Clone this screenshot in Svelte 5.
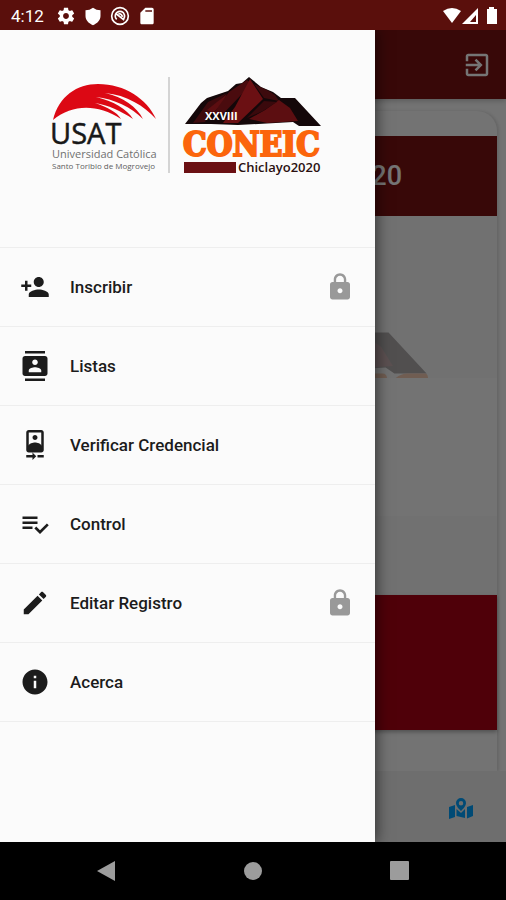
<script>
  const PERSON_ADD =
    "M15 12c2.21 0 4-1.79 4-4s-1.79-4-4-4-4 1.79-4 4 1.79 4 4 4zm-9-2V7H4v3H1v2h3v3h2v-3h3v-2H6zm9 4c-2.67 0-8 1.34-8 4v2h16v-2c0-2.66-5.33-4-8-4z";
  const CONTACTS =
    "M20 0H4v2h16V0zM4 24h16v-2H4v2zM20 4H4c-1.1 0-2 .9-2 2v12c0 1.1.9 2 2 2h16c1.1 0 2-.9 2-2V6c0-1.1-.9-2-2-2zm-8 2.75c1.24 0 2.25 1.01 2.25 2.25s-1.01 2.25-2.25 2.25S9.75 10.24 9.75 9 10.76 6.75 12 6.75zM17 17H7v-1.5c0-1.67 3.33-2.5 5-2.5s5 .83 5 2.5V17z";
  const CAMERA_FRONT =
    "M10 20H5v2h5v2l3-3-3-3v2zm4 0v2h5v-2h-5zM12 8c1.1 0 2-.9 2-2s-.9-2-2-2-1.99.9-1.99 2S10.9 8 12 8zm5-8H7C5.9 0 5 .9 5 2v14c0 1.1.9 2 2 2h10c1.1 0 2-.9 2-2V2c0-1.1-.9-2-2-2zM7 2h10v10.5c0-1.67-3.33-2.5-5-2.5s-5 .83-5 2.5V2z";
  const PLAYLIST_CHECK =
    "M14 10H2v2h12v-2zm0-4H2v2h12V6zM2 16h8v-2H2v2zm19.5-4.5L23 13l-6.99 7-4.51-4.5L13 14l3.01 3 5.49-5.5z";
  const EDIT =
    "M3 17.25V21h3.75L17.81 9.94l-3.75-3.75L3 17.25zM20.71 7.04c.39-.39.39-1.02 0-1.41l-2.34-2.34c-.39-.39-1.02-.39-1.41 0l-1.83 1.83 3.75 3.75 1.83-1.83z";
  const INFO =
    "M12 2C6.48 2 2 6.48 2 12s4.48 10 10 10 10-4.48 10-10S17.52 2 12 2zm1 15h-2v-6h2v6zm0-8h-2V7h2v2z";
  const LOCK =
    "M18 8h-1V6c0-2.76-2.24-5-5-5S7 3.24 7 6v2H6c-1.1 0-2 .9-2 2v10c0 1.1.9 2 2 2h12c1.1 0 2-.9 2-2V10c0-1.1-.9-2-2-2zm-6 9c-1.1 0-2-.9-2-2s.9-2 2-2 2 .9 2 2-.9 2-2 2zm3.1-9H8.9V6c0-1.71 1.39-3.1 3.1-3.1 1.71 0 3.1 1.39 3.1 3.1v2z";
  const EXIT =
    "M10.09 15.59L11.5 17l5-5-5-5-1.41 1.41L12.67 11H3v2h9.67l-2.58 2.59zM19 3H5c-1.11 0-2 .9-2 2v4h2V5h14v14H5v-4H3v4c0 1.1.89 2 2 2h14c1.1 0 2-.9 2-2V5c0-1.1-.9-2-2-2z";
  const SETTINGS =
    "M19.43 12.98c.04-.32.07-.64.07-.98s-.03-.66-.07-.98l2.11-1.65c.19-.15.24-.42.12-.64l-2-3.46c-.12-.22-.39-.3-.61-.22l-2.49 1c-.52-.4-1.08-.73-1.69-.98l-.38-2.65C14.46 2.18 14.25 2 14 2h-4c-.25 0-.46.18-.49.42l-.38 2.65c-.61.25-1.17.59-1.69.98l-2.49-1c-.23-.09-.49 0-.61.22l-2 3.46c-.13.22-.07.49.12.64l2.11 1.65c-.04.32-.07.65-.07.98s.03.66.07.98l-2.11 1.65c-.19.15-.24.42-.12.64l2 3.46c.12.22.39.3.61.22l2.49-1c.52.4 1.08.73 1.69.98l.38 2.65c.03.24.24.42.49.42h4c.25 0 .46-.18.49-.42l.38-2.65c.61-.25 1.17-.59 1.69-.98l2.49 1c.23.09.49 0 .61-.22l2-3.46c.12-.22.07-.49-.12-.64l-2.11-1.65zM12 15.5c-1.93 0-3.5-1.57-3.5-3.5s1.57-3.5 3.5-3.5 3.5 1.57 3.5 3.5-1.57 3.5-3.5 3.5z";
  const SHIELD = "M12 2Q8 5 3 5v7c0 5 4 9 9 11 5-2 9-6 9-11V5q-5 0-9-3z";
  const SD_CARD = "M18 2h-8L4 8v12c0 1.1.9 2 2 2h12c1.1 0 2-.9 2-2V4c0-1.1-.9-2-2-2zM10 5h8v2h-8z";

  const items = [
    { label: "Inscribir", icon: PERSON_ADD, locked: true },
    { label: "Listas", icon: CONTACTS, locked: false },
    { label: "Verificar Credencial", icon: CAMERA_FRONT, locked: false },
    { label: "Control", icon: PLAYLIST_CHECK, locked: false },
    { label: "Editar Registro", icon: EDIT, locked: true },
    { label: "Acerca", icon: INFO, locked: false },
  ];
</script>

{#snippet icon(path)}
  <svg class="icon" viewBox="0 0 24 24" aria-hidden="true">
    <path fill-rule="evenodd" d={path} />
  </svg>
{/snippet}

{#snippet mountain()}
  <path fill="#140709" d="M184 124L200 103L206 98L227 91L235 84L241 83L248 77L260 87L272 92L280 98L294 98L320 126H298L292 122L237 125L210 124Z" />
  <path fill="#3d0a0d" d="M192 123L207 102L226 93L212 107L204 122Z" />
  <path fill="#5c0e11" d="M206 110L226 94L221 104L212 113Z" />
  <path fill="#4a0b0e" d="M228 92L246 80L252 85L240 95L222 114L212 114Z" />
  <path fill="#6b1013" d="M249 79L262 99L237 123H222L234 107Z" />
  <path fill="#3d0a0d" d="M253 84L266 90L274 95L278 101L263 98Z" />
  <path fill="#5c0e11" d="M278 100L289 108L297 121L266 123L248 119L264 110Z" />
  <path fill="#3a090c" d="M263 101L276 102L262 111L246 118Z" />
{/snippet}

<div class="device">
  <header class="status-bar">
    <span class="clock">4:12</span>
    <div class="notices">
      {@render icon(SETTINGS)}
      {@render icon(SHIELD)}
      <svg class="icon" viewBox="0 0 24 24" aria-hidden="true">
        <g fill="none" stroke="#fff" stroke-width="2">
          <circle cx="12" cy="12" r="10" />
          <path d="M8 16A5.500 5.500 0 0 1 8 8q4-3 8 0q3 4 0 8M7 9l10 8M10 9q4 0 5 4" />
        </g>
      </svg>
      {@render icon(SD_CARD)}
    </div>
    <svg class="signals" viewBox="0 0 56 20" aria-hidden="true">
      <path fill="#fff" d="M1 5Q10-1 19 5L10 17Z" />
      <path fill="#fff" fill-rule="evenodd" d="M20 18L36 2V18ZM28 16h6V9z" />
      <path fill="#fff" d="M47 1h5v2h3v15H45V3h2z" />
    </svg>
  </header>

  <div class="screen">
    <main class="page">
      <div class="app-bar">
        <button class="exit" type="button" aria-label="Salir">{@render icon(EXIT)}</button>
      </div>
      <div class="content">
        <section class="card">
          <h1>Chiclayo 2020</h1>
          <div class="banner">
            <svg viewBox="183 76 140 53" aria-hidden="true">
              {@render mountain()}
              <path fill="#f26a1b" d="M272 130q0-4 4-4h14q3 0 3 4zM298 130q4-4 9-4h12q2 0 2 4z" />
            </svg>
          </div>
          <div class="blank"></div>
          <div class="detail"></div>
          <div class="block"></div>
        </section>
      </div>
      <div class="tabs">
        <button class="map" type="button" aria-label="Mapa">
          <svg viewBox="0 0 24 21" aria-hidden="true">
            <path fill-rule="evenodd" d="M12 0a5 5 0 0 1 5 5c0 3-3 6-5 8c-2-2-5-5-5-8a5 5 0 0 1 5-5zM12 3a2 2 0 0 0 0 4.500a2 2 0 0 0 0-4.500z" />
            <path d="M0 9L6 7V19L0 21ZM7.500 11L12 15L16 11V20L7.500 18ZM18 9L24 7V18L18 20.500Z" />
          </svg>
        </button>
      </div>
    </main>

    <div class="scrim"></div>

    <aside class="drawer">
      <div class="brand">
        <svg class="logo" viewBox="50 76 274 102" role="img" aria-label="USAT, XXVIII CONEIC Chiclayo 2020">
          <path fill="#dc0814" d="M52 120C58 96 76 84 97 84C124 84 146 99 155 119C143 106 126 95 104 93C122 97 136 107 142 119C130 107 113 99 95 97C112 101 126 109 132 119C120 111 107 105 94 103C106 107 116 112 120 119C96 104 72 104 52 120Z" />
          <text class="usat" x="49" y="144">USAT</text>
          <text class="uni" x="51" y="158">Universidad Católica</text>
          <text class="saint" x="51" y="169">Santo Toribio de Mogrovejo</text>
          <path fill="#d4d4d4" d="M167 77h2v96h-2z" />
          {@render mountain()}
          <text class="edition" x="204" y="120">XXVIII</text>
          <text class="coneic" x="182" y="156">CONEIC</text>
          <path fill="#6b1013" d="M183 162h52v11h-52z" />
          <text class="city" x="237" y="172">Chiclayo2020</text>
        </svg>
      </div>
      <nav>
        {#each items as item (item.label)}
          <button class="item" type="button">
            {@render icon(item.icon)}
            <span>{item.label}</span>
            {#if item.locked}
              <i class="lock">{@render icon(LOCK)}</i>
            {/if}
          </button>
        {/each}
      </nav>
    </aside>
  </div>

  <footer class="system-nav">
    <button type="button" aria-label="Atrás">
      <svg viewBox="0 0 22 22"><path d="M2 11L20 1V21Z" /></svg>
    </button>
    <button type="button" aria-label="Inicio">
      <svg viewBox="0 0 22 22"><circle cx="11" cy="11" r="9" /></svg>
    </button>
    <button type="button" aria-label="Recientes">
      <svg viewBox="0 0 22 22"><rect x="1" y="1" width="19" height="19" rx="1" /></svg>
    </button>
  </footer>
</div>

<style>
  :global(body) {
    margin: 0;
    background: #000;
  }

  .device {
    display: flex;
    flex-direction: column;
    min-height: 100vh;
    font-family: Roboto, "Liberation Sans", sans-serif;
  }

  button {
    appearance: none;
    border: none;
    background: none;
    padding: 0;
    font: inherit;
    color: inherit;
    cursor: pointer;
  }

  svg {
    display: block;
  }

  .icon {
    width: 30px;
    height: 30px;
    flex: none;
    fill: currentColor;
  }

  .status-bar {
    display: flex;
    align-items: center;
    height: 30px;
    box-sizing: border-box;
    padding: 1px 8px 0 11px;
    background: #5a0f0c;
    color: #fff;
  }

  .clock {
    font-size: 17px;
    line-height: 20px;
  }

  .notices {
    display: flex;
    gap: 7px;
    margin-left: 12px;
  }

  .notices .icon {
    width: 20px;
    height: 20px;
  }

  .signals {
    width: 56px;
    height: 20px;
    margin-left: auto;
  }

  /* page, scrim and drawer share one cell */
  .screen {
    display: grid;
    grid-template-columns: minmax(0, 1fr);
    flex: 1;
    overflow: hidden;
  }

  .page,
  .scrim,
  .drawer {
    grid-area: 1 / 1;
    isolation: isolate;
  }

  .page {
    display: flex;
    flex-direction: column;
    background: #fafafa;
  }

  .app-bar {
    display: flex;
    align-items: center;
    justify-content: flex-end;
    height: 69px;
    padding-right: 14px;
    background: #7b1313;
    color: #fff;
    box-shadow: 0 2px 5px rgba(0, 0, 0, 0.2);
  }

  .content {
    flex: 1;
    display: flex;
    flex-direction: column;
    padding: 12px 9px 0;
  }

  .card {
    flex: 1;
    padding-top: 25px;
    border-radius: 0 20px 0 0;
    box-shadow: 2px 0 3px rgba(0, 0, 0, 0.12);
  }

  h1 {
    margin: 0;
    padding-right: 95px;
    background: #7b1313;
    color: #fff;
    font-size: 27px;
    font-weight: 500;
    line-height: 80px;
    text-align: right;
  }

  .banner {
    display: flex;
    align-items: flex-end;
    justify-content: flex-end;
    height: 162px;
    padding-right: 66px;
    background: #f6f6f6;
  }

  .banner svg {
    width: 205px;
    height: 78px;
    opacity: 0.3;
  }

  .blank {
    height: 138px;
  }

  .detail {
    height: 79px;
    background: #f6f6f6;
  }

  .block {
    height: 135px;
    background: #ac0014;
    box-shadow: 0 2px 4px rgba(0, 0, 0, 0.3);
  }

  .tabs {
    display: flex;
    align-items: center;
    justify-content: flex-end;
    height: 67px;
    padding: 4px 33px 0 0;
    background: #f0f0f0;
    color: #00a2ff;
  }

  .map svg {
    width: 24px;
    height: 21px;
    fill: currentColor;
  }

  .scrim {
    background: rgba(0, 0, 0, 0.54);
  }

  .drawer {
    width: 375px;
    max-width: 80vw;
    background: #fbfbfb;
    box-shadow: 0 0 14px 1px rgba(0, 0, 0, 0.6);
  }

  .brand {
    display: flex;
    justify-content: center;
    padding: 46px 16px 69px;
  }

  .logo {
    width: 274px;
    height: 102px;
  }

  .usat {
    font: 29px "Open Sans", sans-serif;
    fill: #181818;
    stroke: #181818;
    stroke-width: 0.5;
  }

  .uni {
    font: 11px "Open Sans", sans-serif;
    fill: #707070;
  }

  .saint {
    font: 8px "Open Sans", sans-serif;
    fill: #606060;
  }

  .edition {
    font: bold 11px "Open Sans", sans-serif;
    fill: #fff;
  }

  .coneic {
    font: bold 33px "DejaVu Serif Condensed", "DejaVu Serif", serif;
    fill: #fb650c;
    stroke: #fb650c;
    stroke-width: 2;
  }

  .city {
    font: 600 13px "Open Sans", sans-serif;
    fill: #2a1010;
  }

  nav {
    border-top: 1px solid #eee;
  }

  .item {
    display: flex;
    align-items: center;
    gap: 20px;
    width: 100%;
    height: 79px;
    padding: 0 20px;
    border-bottom: 1px solid #eee;
    color: #1c1c1c;
    font-size: 17px;
    font-weight: 500;
    line-height: 20px;
    text-align: left;
  }

  .lock {
    margin-left: auto;
    color: #999;
  }

  .system-nav {
    display: flex;
    align-items: center;
    justify-content: space-around;
    height: 58px;
    padding: 0 33px;
    background: #000;
  }

  .system-nav svg {
    width: 22px;
    height: 22px;
    fill: #9c9c9c;
  }
</style>
